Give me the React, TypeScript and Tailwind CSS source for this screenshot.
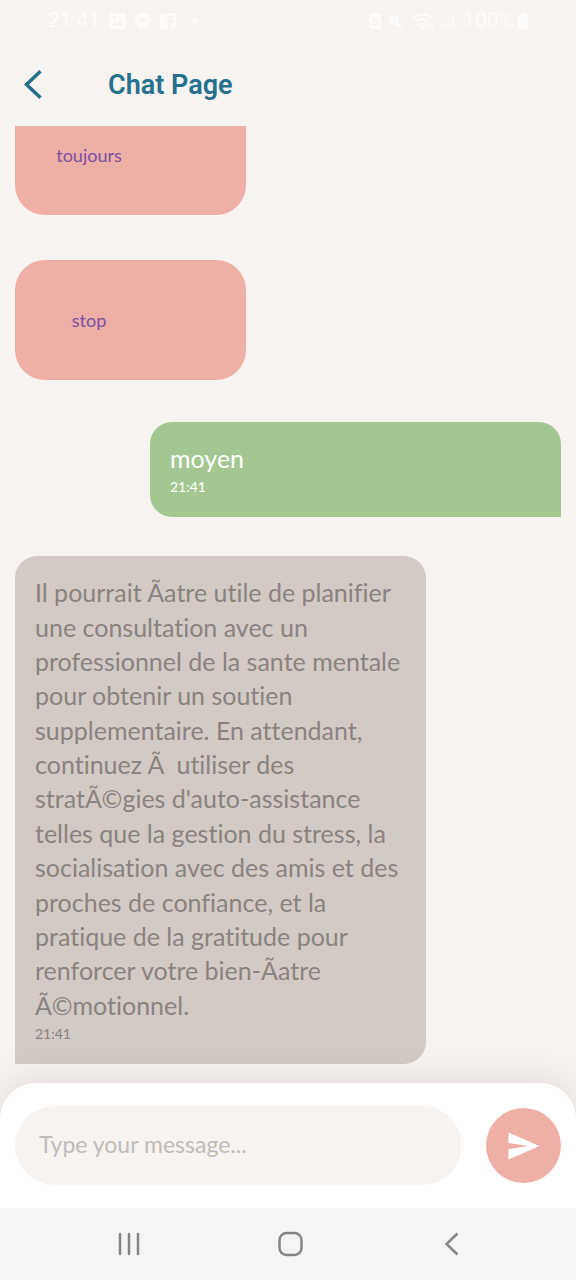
import { useState } from "react";

type ChatMessage = {
  id: number;
  kind: "choice" | "sent" | "received";
  text: string;
  time?: string;
};

const messages: ChatMessage[] = [
  { id: 1, kind: "choice", text: "toujours" },
  { id: 2, kind: "choice", text: "stop" },
  { id: 3, kind: "sent", text: "moyen", time: "21:41" },
  {
    id: 4,
    kind: "received",
    text: "Il pourrait Ãatre utile de planifier une consultation avec un professionnel de la sante mentale pour obtenir un soutien supplementaire. En attendant, continuez Ã\u00a0 utiliser des stratÃ©gies d'auto-assistance telles que la gestion du stress, la socialisation avec des amis et des proches de confiance, et la pratique de la gratitude pour renforcer votre bien-Ãatre Ã©motionnel.",
    time: "21:41",
  },
];

function StatusBar() {
  return (
    <div className="flex h-[42px] shrink-0 items-center justify-between px-12 font-['Roboto',sans-serif] text-[21px] text-white/75">
      <div className="flex items-center gap-2">
        <span className="w-[54px]">21:41</span>
        <svg className="size-4" viewBox="0 0 16 16" fill="currentColor" aria-hidden="true">
          <path
            fillRule="evenodd"
            d="M2 0h12a2 2 0 0 1 2 2v12a2 2 0 0 1-2 2H2a2 2 0 0 1-2-2V2a2 2 0 0 1 2-2Zm.500 13h11L10 7.500l-3 3.700-2-2L2.500 13ZM4.500 3a1.500 1.500 0 1 0 0 3 1.500 1.500 0 0 0 0-3Z"
          />
        </svg>
        <svg className="ml-px size-4" viewBox="0 0 16 16" fill="currentColor" aria-hidden="true">
          <path
            fillRule="evenodd"
            d="M8 0c4.500 0 8 3.200 8 7.500S12.500 15 8 15l-2-.2L3.500 16v-2.300C1.300 12.300 0 10 0 7.500 0 3.200 3.500 0 8 0ZM3.200 9.800 7 5.800l2 1.900 3.700-1.900-3.800 4-2-1.900-3.700 1.900Z"
          />
        </svg>
        <svg className="ml-px size-4" viewBox="0 0 16 16" fill="currentColor" aria-hidden="true">
          <path d="M1.500 0h13A1.500 1.500 0 0 1 16 1.500v13a1.500 1.500 0 0 1-1.500 1.500H11v-6h2.200l.4-2.500H11V6c0-.8.400-1.300 1.400-1.300h1.300V2.500h-2C9.500 2.500 8.300 3.800 8.300 5.800v1.700H6V10h2.300v6H1.500A1.500 1.500 0 0 1 0 14.500v-13A1.500 1.500 0 0 1 1.500 0Z" />
        </svg>
        <span className="ml-2 size-[6px] rounded-full bg-current" />
      </div>
      <div className="flex items-center gap-2">
        <svg className="h-4 w-3" viewBox="0 0 12 16" fill="currentColor" aria-hidden="true">
          <path
            fillRule="evenodd"
            d="M3.500 0h5v1.500H11a1 1 0 0 1 1 1V15a1 1 0 0 1-1 1H1a1 1 0 0 1-1-1V2.500a1 1 0 0 1 1-1h2.500ZM6 4.500 1.800 12h8.400ZM6 7.300 8 10.800H4Z"
          />
        </svg>
        <svg className="h-4 w-[14px]" viewBox="0 0 14 16" aria-hidden="true">
          <path d="M0 5.500h4L10 1v14l-6-4.500H0Z" fill="currentColor" />
          <path d="m1 1 12 14" stroke="currentColor" strokeWidth="1.500" />
        </svg>
        <div className="flex items-center">
          <svg
            className="h-5 w-6"
            viewBox="0 0 24 20"
            fill="none"
            stroke="currentColor"
            strokeWidth="2"
            aria-hidden="true"
          >
            <path d="M2 7a14 14 0 0 1 19 0M5 10.500a9.500 9.500 0 0 1 13 0M8 14a5 5 0 0 1 7 0" />
            <path d="m10 16 1.500 2 1.500-2ZM18 18v-5l-2 2m5-2v5l2-2" strokeWidth="1.500" />
          </svg>
          <svg className="ml-1 h-4 w-4 opacity-50" viewBox="0 0 16 16" fill="currentColor" aria-hidden="true">
            <path d="M0 12h3v4H0zM4 9h3v7H4zM8 5h3v11H8zM12 1h3v15h-3z" />
          </svg>
        </div>
        <div className="flex items-center gap-1">
          <span>100%</span>
          <svg className="h-4 w-[10px]" viewBox="0 0 10 16" fill="currentColor" aria-hidden="true">
            <path d="M3 0h4v2h2a1 1 0 0 1 1 1v12a1 1 0 0 1-1 1H1a1 1 0 0 1-1-1V3a1 1 0 0 1 1-1h2Z" />
          </svg>
        </div>
      </div>
    </div>
  );
}

function ChatHeader() {
  return (
    <header className="flex h-[84px] shrink-0 items-center pt-0.5 pl-5">
      <button type="button" aria-label="Back" className="flex h-12 w-[88px] items-center text-[#25708d]">
        <svg
          className="h-8 w-6"
          viewBox="0 0 24 32"
          fill="none"
          stroke="currentColor"
          strokeWidth="3.500"
          aria-hidden="true"
        >
          <path d="M20.500 2.200 6.500 15.500l14 13.300" />
        </svg>
      </button>
      <h1 className="font-['Roboto',sans-serif] text-[27px] font-semibold text-[#25708d]">Chat Page</h1>
    </header>
  );
}

function Message({ message }: { message: ChatMessage }) {
  if (message.kind === "choice") {
    return (
      <button
        type="button"
        className="mb-[45px] flex h-[120px] w-full max-w-[231px] shrink-0 items-center rounded-[30px] bg-[#edafa6] text-lg leading-6 text-[#7a50a4] last-of-type:mb-[42px]"
      >
        <span className="w-[148px] text-center">{message.text}</span>
      </button>
    );
  }

  const sent = message.kind === "sent";
  return (
    <article
      className={
        sent
          ? "mb-[39px] w-full max-w-[411px] shrink-0 self-end rounded-[22px] rounded-br-none bg-[#a4c791] px-5 pt-[19px] pb-[19px] text-white"
          : "w-full max-w-[411px] shrink-0 rounded-[22px] rounded-bl-none bg-[#d3cac5] px-5 pt-[19px] pb-[19px] text-[#8a827f]"
      }
    >
      <p className="text-[25px] leading-snug [font-variant-ligatures:none]">{message.text}</p>
      <time className="block text-sm leading-[23px]">{message.time}</time>
    </article>
  );
}

function Composer() {
  const [draft, setDraft] = useState("");
  return (
    <form
      onSubmit={(event) => {
        event.preventDefault();
        setDraft("");
      }}
      className="relative flex h-[125px] shrink-0 items-center gap-6 rounded-t-[36px] bg-white px-[15px] shadow-[0_0_40px_rgba(90,60,60,0.15)]"
    >
      <input
        type="text"
        aria-label="Message"
        placeholder="Type your message..."
        value={draft}
        onChange={(event) => setDraft(event.target.value)}
        className="h-[79px] min-w-0 flex-1 rounded-full bg-[#f7f3f0] px-6 pb-1 text-[23px] text-[#8a827f] outline-none placeholder:text-[#c1bbb9]"
      />
      <button
        type="submit"
        aria-label="Send"
        className="flex size-[75px] shrink-0 items-center justify-center rounded-full bg-[#edafa6] text-white"
      >
        <svg className="h-7 w-8" viewBox="0 0 32 28" fill="currentColor" aria-hidden="true">
          <path d="M.500.500 31.500 14 .500 27.500V17l20-3-20-3Z" />
        </svg>
      </button>
    </form>
  );
}

function SystemNav() {
  return (
    <nav className="relative flex h-[72px] shrink-0 items-center justify-between bg-[#f5f5f5] pr-[107px] pl-[112px] text-[#858585]">
      <button type="button" aria-label="Recent apps" className="p-1">
        <svg className="size-[26px]" viewBox="0 0 26 26" stroke="currentColor" strokeWidth="2.500" strokeLinecap="round" aria-hidden="true">
          <path d="M4 3v20M13 3v20M22 3v20" />
        </svg>
      </button>
      <button type="button" aria-label="Home" className="p-1">
        <svg className="size-[26px]" viewBox="0 0 26 26" fill="none" stroke="currentColor" strokeWidth="2.500" aria-hidden="true">
          <rect x="1.500" y="2" width="22" height="22" rx="7" />
        </svg>
      </button>
      <button type="button" aria-label="Back to previous app" className="p-1">
        <svg className="size-[26px]" viewBox="0 0 26 26" fill="none" stroke="currentColor" strokeWidth="2.500" aria-hidden="true">
          <path d="M18.500 2.500 7.500 13l11 10.500" />
        </svg>
      </button>
    </nav>
  );
}

export default function App() {
  return (
    <div className="flex h-dvh flex-col overflow-hidden bg-[#f7f3f0] font-['Lato',sans-serif]">
      <StatusBar />
      <ChatHeader />
      <main className="flex min-h-0 flex-1 flex-col justify-end overflow-hidden px-[15px] pb-[19px]">
        {messages.map((message) => (
          <Message key={message.id} message={message} />
        ))}
      </main>
      <Composer />
      <SystemNav />
    </div>
  );
}
